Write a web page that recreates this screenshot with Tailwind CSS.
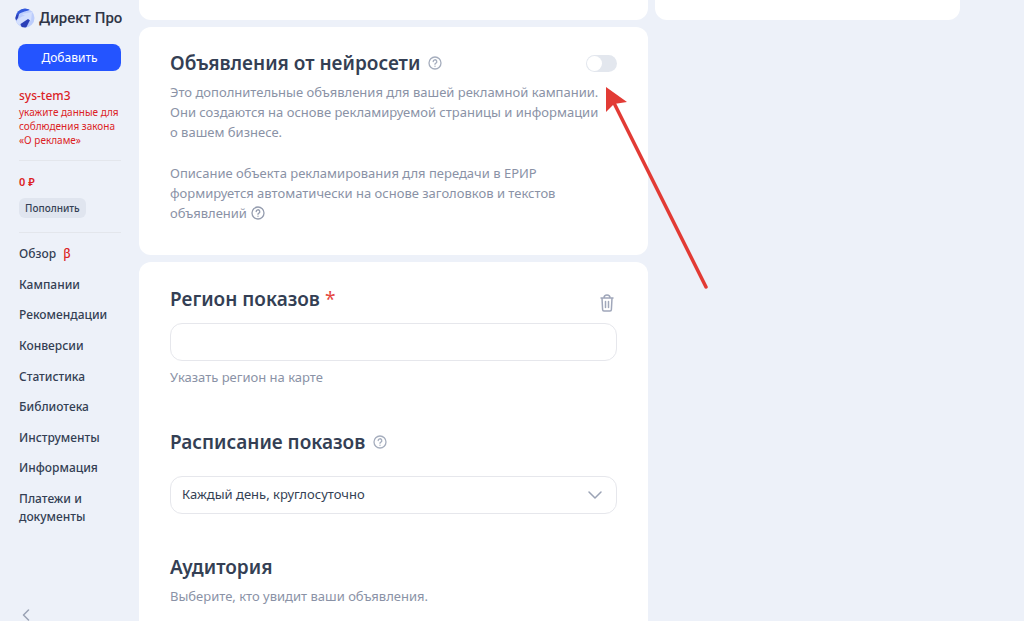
<!DOCTYPE html>
<html lang="ru">
  <head>
    <meta charset="utf-8" />
    <meta name="viewport" content="width=device-width, initial-scale=1" />
    <title>Директ Про</title>
    <script src="https://cdn.jsdelivr.net/npm/@tailwindcss/browser@4"></script>
  </head>
  <body
    class="flex h-screen overflow-hidden bg-[#edf1f9] font-['Noto_Sans',sans-serif] text-[#343f54]"
  >
    <!-- Sidebar -->
    <aside class="flex w-[139px] shrink-0 flex-col px-[18px]">
      <a
        href="#"
        class="-ml-[3px] flex h-9 items-center gap-1 font-[Roboto,sans-serif] text-[15px] font-medium whitespace-nowrap text-[#303647]"
      >
        <svg class="h-5 w-5 shrink-0" viewBox="0 0 20 20">
          <defs>
            <clipPath id="logoClip"><circle cx="10" cy="10" r="9.5" /></clipPath>
          </defs>
          <g clip-path="url(#logoClip)">
            <path fill="#bccdfc" d="M0 0h20v20H0z" />
            <path fill="#3459dc" d="M0 0h16c0 3-8 3-12 6L0 12z" />
            <path fill="#2b3fb8" d="M0 8 4 6 3 10l-3 4zM7 20 5 15l8-6 2 3-4 8z" />
            <path fill="#d3dffe" d="M1 14C4 9 8 8 10 8L7 6l10-2-1 9-3-2-9 6z" />
          </g>
        </svg>
        <span>Директ Про</span>
      </a>

      <button
        type="button"
        class="mt-2 h-[27px] w-full shrink-0 rounded-lg bg-[#2454ff] text-xs text-white"
      >
        Добавить
      </button>

      <div class="mt-4 ml-px border-b border-[#e3e6ec] pb-[13px] text-[#dc1f26]">
        <div class="text-xs leading-[18px] font-medium">sys-tem3</div>
        <div class="text-[10px] leading-[14px] whitespace-nowrap">
          укажите данные для<br />соблюдения закона<br />«О рекламе»
        </div>
      </div>

      <div class="ml-px border-b border-[#e3e6ec] pt-[13px] pb-[14px]">
        <div class="text-[11px] leading-4 font-semibold text-[#dc1f26]">0 ₽</div>
        <button
          type="button"
          class="mt-2 flex h-5 items-center rounded-md bg-[#e0e5ef] px-[6px] text-[10px] font-medium"
        >
          Пополнить
        </button>
      </div>

      <nav
        class="mt-3 ml-px flex flex-1 flex-col justify-between text-xs leading-[18px] font-medium"
      >
        <a href="#">Обзор <span class="ml-1 text-[#dc1f26]">β</span></a>
        <a href="#">Кампании</a>
        <a href="#">Рекомендации</a>
        <a href="#">Конверсии</a>
        <a href="#">Статистика</a>
        <a href="#">Библиотека</a>
        <a href="#">Инструменты</a>
        <a href="#">Информация</a>
        <a href="#">Платежи и документы</a>
      </nav>

      <div class="flex h-[95px] shrink-0 items-end">
        <button type="button" aria-label="Свернуть меню" class="ml-1">
          <svg
            class="h-3 w-2"
            viewBox="0 0 8 12"
            fill="none"
            stroke="#9aa2b4"
            stroke-width="1.5"
            stroke-linecap="round"
            stroke-linejoin="round"
          >
            <path d="M6.500 1 1.500 6l5 5" />
          </svg>
        </button>
      </div>
    </aside>

    <!-- Main content -->
    <main
      class="grid min-w-0 flex-1 grid-cols-[5fr_3fr] content-start gap-[7px] pr-16"
    >
      <section class="h-5 rounded-b-xl bg-white"></section>
      <section class="h-5 rounded-b-xl bg-white"></section>

      <!-- AI ads -->
      <section class="relative h-fit rounded-xl bg-white px-[31px] pt-[23px] pb-8">
        <div class="flex items-center justify-between">
          <div class="flex items-center gap-2">
            <h2 class="text-[19px] leading-[26px] font-semibold">Объявления от нейросети</h2>
            <button type="button" aria-label="Справка">
              <svg
                class="h-[14px] w-[14px]"
                viewBox="0 0 14 14"
                fill="none"
                stroke="#a5adbd"
                stroke-width="1.300"
                stroke-linecap="round"
              >
                <circle cx="7" cy="7" r="6" />
                <path d="M5.200 5.600a1.800 1.800 0 1 1 2.700 1.500c-.6.3-.9.6-.9 1.200M7 10.200v.1" />
              </svg>
            </button>
          </div>
          <label class="relative h-[17px] w-[31px]">
            <input
              type="checkbox"
              aria-label="Объявления от нейросети"
              class="peer block h-full w-full appearance-none rounded-full bg-[#e3e7ee]"
            />
            <span
              class="absolute top-px left-px h-[15px] w-[15px] rounded-full bg-white peer-checked:left-[15px]"
            ></span>
          </label>
        </div>
        <div class="mt-[6px] text-[13px] leading-5 text-[#8a92a6]">
          <p>
            Это дополнительные объявления для вашей рекламной кампании.<br />
            Они создаются на основе рекламируемой страницы и информации<br />
            о вашем бизнесе.
          </p>
          <p class="mt-[21px]">
            Описание объекта рекламирования для передачи в ЕРИР<br />
            формируется автоматически на основе заголовков и текстов<br />
            <span class="flex items-center gap-1">
              объявлений
              <button type="button" aria-label="Справка">
                <svg
                  class="h-[14px] w-[14px]"
                  viewBox="0 0 14 14"
                  fill="none"
                  stroke="#949cae"
                  stroke-width="1.300"
                  stroke-linecap="round"
                >
                  <circle cx="7" cy="7" r="6" />
                  <path d="M5.200 5.600a1.800 1.800 0 1 1 2.700 1.500c-.6.3-.9.6-.9 1.200M7 10.200v.1" />
                </svg>
              </button>
            </span>
          </p>
        </div>

        <!-- Pointer to the switch -->
        <svg
          class="pointer-events-none absolute top-[60px] right-[-64px] z-10 h-[206px] w-[108px]"
          viewBox="0 0 108 206"
        >
          <path d="M9 14 102 200" stroke="#e23b35" stroke-width="3.500" stroke-linecap="round" />
          <path d="M2 0 23 15 10 17 2 25z" fill="#e23b35" />
        </svg>
      </section>

      <!-- Targeting -->
      <section class="col-start-1 rounded-xl bg-white px-[31px] pt-6 pb-10">
        <div class="flex items-center justify-between">
          <h2 class="text-[19px] leading-[26px] font-semibold">
            <label for="region">Регион показов <span class="font-normal text-[#e5483f]">*</span></label>
          </h2>
          <button type="button" aria-label="Удалить" class="mt-2 mr-[3px]">
            <svg
              class="h-[18px] w-[14px]"
              viewBox="0 0 14 18"
              fill="none"
              stroke="#a0a7ba"
              stroke-width="1.500"
              stroke-linecap="round"
              stroke-linejoin="round"
            >
              <path d="M1 4h12M4 4c0-4 6-4 6 0M2 4l.6 11.500c0 1 .4 1.500 1.400 1.500h6c1 0 1.400-.5 1.400-1.500L12 4M5.500 7.500v6M8.500 7.500v6" />
            </svg>
          </button>
        </div>
        <input
          id="region"
          type="text"
          class="mt-[11px] block h-[38px] w-full rounded-xl border border-[#e6e7ec] px-3 text-[13px]"
        />
        <a href="#" class="mt-[6px] block text-[13px] leading-5 text-[#8a92a6]">
          Указать регион на карте
        </a>

        <div class="mt-[42px] flex items-center gap-2">
          <h2 class="text-[19px] leading-[26px] font-semibold">
            <label for="schedule">Расписание показов</label>
          </h2>
          <button type="button" aria-label="Справка">
            <svg
              class="h-[14px] w-[14px]"
              viewBox="0 0 14 14"
              fill="none"
              stroke="#a5adbd"
              stroke-width="1.300"
              stroke-linecap="round"
            >
              <circle cx="7" cy="7" r="6" />
              <path d="M5.200 5.600a1.800 1.800 0 1 1 2.700 1.500c-.6.3-.9.6-.9 1.200M7 10.200v.1" />
            </svg>
          </button>
        </div>
        <div class="relative mt-[21px]">
          <select
            id="schedule"
            class="block h-[38px] w-full appearance-none rounded-xl border border-[#e6e7ec] bg-white px-[11px] text-[13px]"
          >
            <option>Каждый день, круглосуточно</option>
          </select>
          <svg
            class="pointer-events-none absolute top-[14px] right-[14px] h-[10px] w-4"
            viewBox="0 0 16 10"
            fill="none"
            stroke="#9ba3b5"
            stroke-width="1.500"
            stroke-linecap="round"
            stroke-linejoin="round"
          >
            <path d="m2 2 6 6 6-6" />
          </svg>
        </div>

        <h2 class="mt-10 text-[19px] leading-[26px] font-semibold">Аудитория</h2>
        <p class="mt-[6px] text-[13px] leading-5 text-[#8a92a6]">
          Выберите, кто увидит ваши объявления.
        </p>
      </section>
    </main>
  </body>
</html>
